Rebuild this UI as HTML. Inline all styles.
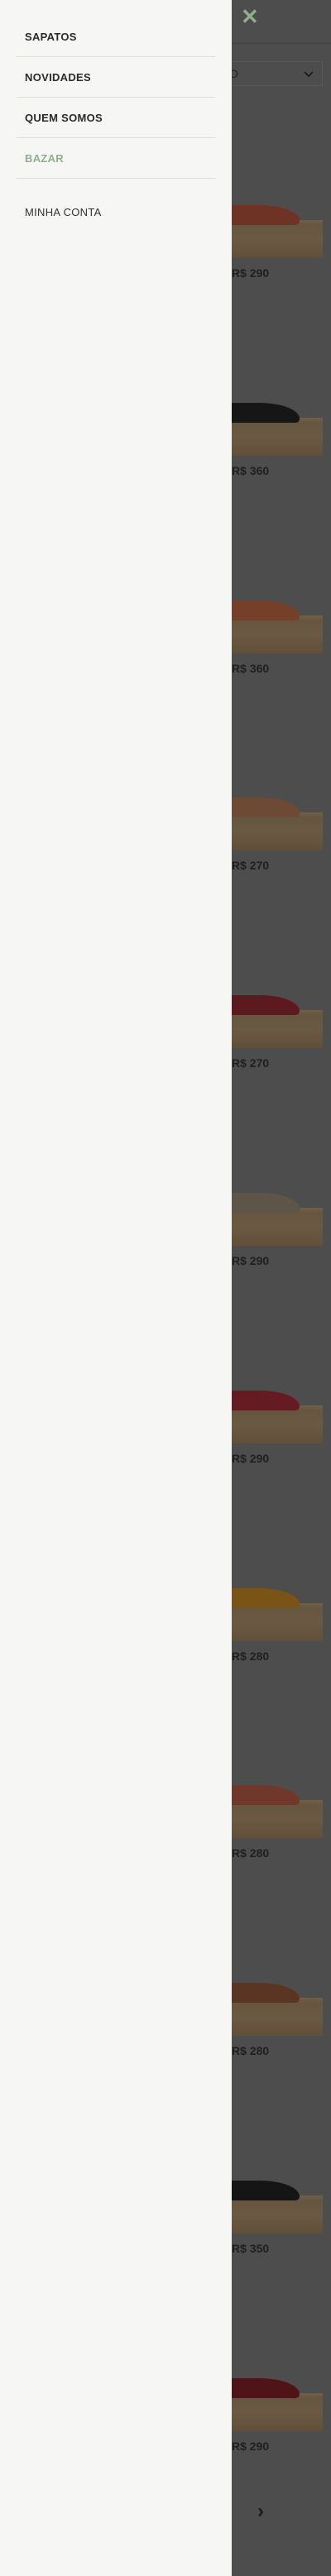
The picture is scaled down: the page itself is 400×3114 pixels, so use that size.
<!DOCTYPE html>
<html><head><meta charset="utf-8"><style>
*{margin:0;padding:0;box-sizing:border-box}
body{width:400px;height:3114px;background:#4d4d4d;position:relative;overflow:hidden;font-family:"Liberation Sans",sans-serif}
.hdrline{position:absolute;left:280px;right:0;top:52px;height:1px;background:#444}
.x{position:absolute;left:291px;top:8px;color:#8fb08a;font-size:26px;font-weight:bold;line-height:24px}
.sel{position:absolute;left:270px;top:74px;width:120px;height:30px;border:1px solid #585858;color:#222;font-size:14px;line-height:28px;padding-left:6px}
.sel svg{position:absolute;right:10px;top:11px}
.card{position:absolute;left:280px;width:120px;height:130px}
.wood{position:absolute;left:0;top:54px;width:110px;height:46px;background:linear-gradient(180deg,#70604a 0,#66563f 14%,#6b5a43 50%,#615039 100%)}
.shoe{position:absolute;left:-10px;top:36px;width:92px;height:24px;border-radius:6px 60px 6px 4px/6px 24px 6px 4px}
.price{position:absolute;left:0;top:110px;font-size:14px;font-weight:bold;color:#1f1f1f}
.drawer{position:absolute;left:0;top:0;width:280px;height:3114px;background:#f6f6f5}
.item{position:absolute;left:30px;font-size:13px;font-weight:bold;color:#2a2a2a;letter-spacing:.3px}
.line{position:absolute;left:20px;width:240px;height:1px;background:#e2ddd2}
.arrow{position:absolute;left:311px;top:3022px;color:#1a1a1a;font-size:24px;font-weight:bold}
</style></head><body>
<div class="x">✕</div>
<div class="hdrline"></div>
<div class="sel">O<svg width="12" height="8" viewBox="0 0 12 8"><path d="M1 1l5 5 5-5" stroke="#1a1a1a" stroke-width="1.6" fill="none"/></svg></div>

<div class="card" style="top:212px"><div class="wood"></div><div class="shoe" style="background:#6e3324"></div><div class="price">R$ 290</div></div>
<div class="card" style="top:451px"><div class="wood"></div><div class="shoe" style="background:#161616"></div><div class="price">R$ 360</div></div>
<div class="card" style="top:690px"><div class="wood"></div><div class="shoe" style="background:#74402a"></div><div class="price">R$ 360</div></div>
<div class="card" style="top:928px"><div class="wood"></div><div class="shoe" style="background:#6c4a36"></div><div class="price">R$ 270</div></div>
<div class="card" style="top:1167px"><div class="wood"></div><div class="shoe" style="background:#5c1a1e"></div><div class="price">R$ 270</div></div>
<div class="card" style="top:1406px"><div class="wood"></div><div class="shoe" style="background:#5e5549"></div><div class="price">R$ 290</div></div>
<div class="card" style="top:1645px"><div class="wood"></div><div class="shoe" style="background:#641b22"></div><div class="price">R$ 290</div></div>
<div class="card" style="top:1884px"><div class="wood"></div><div class="shoe" style="background:#7a5417"></div><div class="price">R$ 280</div></div>
<div class="card" style="top:2122px"><div class="wood"></div><div class="shoe" style="background:#70382a"></div><div class="price">R$ 280</div></div>
<div class="card" style="top:2361px"><div class="wood"></div><div class="shoe" style="background:#5a3524"></div><div class="price">R$ 280</div></div>
<div class="card" style="top:2600px"><div class="wood"></div><div class="shoe" style="background:#151515"></div><div class="price">R$ 350</div></div>
<div class="card" style="top:2839px"><div class="wood"></div><div class="shoe" style="background:#4e1418"></div><div class="price">R$ 290</div></div>
<div class="arrow">›</div>

<div class="drawer">
<div class="item" style="top:37px">SAPATOS</div>
<div class="line" style="top:68px"></div>
<div class="item" style="top:86px">NOVIDADES</div>
<div class="line" style="top:117px"></div>
<div class="item" style="top:135px">QUEM SOMOS</div>
<div class="line" style="top:166px"></div>
<div class="item" style="top:184px;color:#8fb08a">BAZAR</div>
<div class="line" style="top:215px"></div>
<div class="item" style="top:249px;font-weight:normal;color:#333">MINHA CONTA</div>
</div>
</body></html>
